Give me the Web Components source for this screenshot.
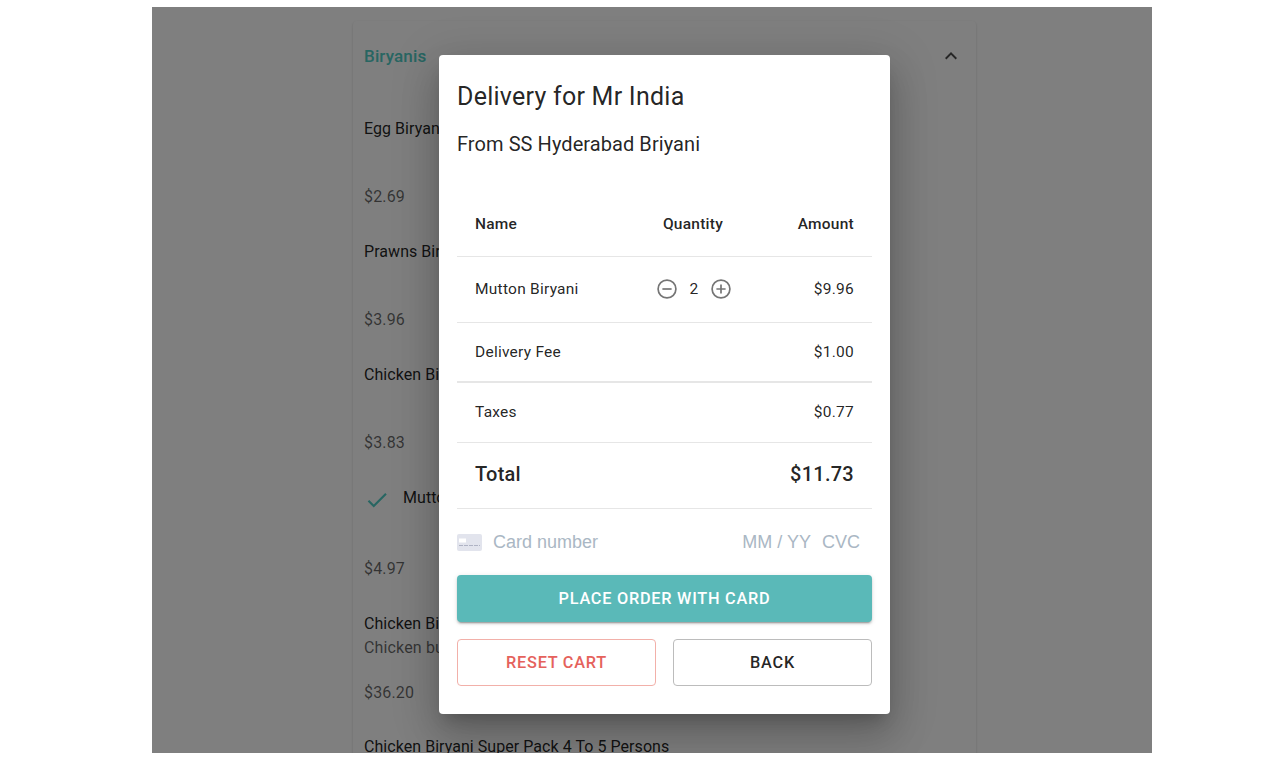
<!DOCTYPE html>
<html>
<head>
<meta charset="utf-8">
<title>Delivery</title>
<style>
  html, body { margin: 0; background: #fff; }
  body { padding: 7px 0 0 152px; font-family: Roboto, "Liberation Sans", sans-serif; }
</style>
</head>
<body>
<app-frame>
  <menu-section title="Biryanis">
    <menu-item name="Egg Biryani" price="$2.69"></menu-item>
    <menu-item name="Prawns Biryani" price="$3.96"></menu-item>
    <menu-item name="Chicken Biryani" price="$3.83"></menu-item>
    <menu-item name="Mutton Biryani" price="$4.97" selected></menu-item>
    <menu-item name="Chicken Biryani Family Pack" desc="Chicken bucket" price="$36.20"></menu-item>
    <menu-item name="Chicken Biryani Super Pack 4 To 5 Persons"></menu-item>
  </menu-section>
  <order-dialog slot="dialog" customer="Mr India" shop="SS Hyderabad Briyani">
    <order-row kind="head" name="Name" qty="Quantity" amount="Amount" lift="1"></order-row>
    <order-row name="Mutton Biryani" amount="$9.96" height="66" lift="1"><qty-stepper value="2"></qty-stepper></order-row>
    <order-row name="Delivery Fee" amount="$1.00" height="60" rule="2"></order-row>
    <order-row name="Taxes" amount="$0.77" height="60" lift="1"></order-row>
    <order-row kind="total" name="Total" amount="$11.73" lift="3"></order-row>
    <card-field></card-field>
    <action-button kind="primary">Place order with card</action-button>
    <div style="display:grid;grid-template-columns:1fr 1fr;gap:17px;margin-top:17px">
      <action-button kind="danger">Reset cart</action-button>
      <action-button kind="plain">Back</action-button>
    </div>
  </order-dialog>
</app-frame>

<script>
// Small helper: every element gets an open shadow root with its own markup
class ShadowElement extends HTMLElement {
  constructor() {
    super();
    this.attachShadow({ mode: "open" });
  }
  connectedCallback() {
    this.shadowRoot.innerHTML = this.render();
  }
  attr(name, fallback = "") {
    return this.hasAttribute(name) ? this.getAttribute(name) : fallback;
  }
}

// Grey page area, the dialog lies on top of the content
class AppFrame extends ShadowElement {
  render() {
    return `
<style>
  :host { display: block; position: relative; width: 1000px; height: 746px; overflow: hidden; background: #fff; }
  .content { padding: 14px 176px 0 201px; }
  .overlay { position: absolute; inset: 0; background: rgba(0,0,0,.5); padding: 48px 0 0 287px; }
</style>
<div class="content"><slot></slot></div>
<div class="overlay"><slot name="dialog"></slot></div>`;
  }
}

class MenuSection extends ShadowElement {
  render() {
    return `
<style>
  :host { display: block; background: #fff; border-radius: 4px;
    box-shadow: 0 2px 1px -1px rgba(0,0,0,.2), 0 1px 1px 0 rgba(0,0,0,.14), 0 1px 3px 0 rgba(0,0,0,.12); }
  header { display: flex; align-items: center; justify-content: space-between; height: 70px; padding: 0 13px 26px 11px; }
  h2 { margin: 0; font: 500 17px/24px Roboto, sans-serif; letter-spacing: .15px; color: #50ccc5; }
  svg { width: 24px; height: 24px; fill: rgba(0,0,0,.7); display: block; }
</style>
<header>
  <h2>${this.attr("title")}</h2>
  <svg viewBox="0 0 24 24"><path d="M12 8l-6 6 1.41 1.41L12 10.83l4.59 4.58L18 14z"/></svg>
</header>
<slot></slot>`;
  }
}

class MenuItem extends ShadowElement {
  render() {
    const selected = this.hasAttribute("selected");
    const desc = this.attr("desc");
    const price = this.attr("price");
    const gap = selected ? 23 : desc ? 21 : 20;
    return `
<style>
  :host { display: block; height: ${selected ? 126 : 123}px; padding-left: 11px; font: 400 16px/24px Roboto, sans-serif; letter-spacing: .15px; }
  .name { display: flex; align-items: center; height: 24px; letter-spacing: .05px; color: rgba(0,0,0,.87); }
  svg { width: 26px; height: 26px; margin: 3px 13px 0 0; fill: #50ccc5; flex: none; }
  .desc { height: 24px; color: rgba(0,0,0,.6); }
  .price { margin-top: ${gap}px; color: rgba(0,0,0,.6); }
</style>
<div class="name">
  ${selected ? `<svg viewBox="0 0 24 24"><path d="M9 16.17L4.83 12l-1.42 1.41L9 19 21 7l-1.41-1.41z"/></svg>` : ""}
  <span>${this.attr("name")}</span>
</div>
${price ? `<div class="desc">${desc}</div><div class="price">${price}</div>` : ""}`;
  }
}

class OrderDialog extends ShadowElement {
  render() {
    return `
<style>
  :host { display: block; box-sizing: border-box; width: 451px; height: 659px; padding: 25px 18px 0; background: #fff; border-radius: 4px;
    color: rgba(0,0,0,.87);
    box-shadow: 0 11px 15px -7px rgba(0,0,0,.2), 0 24px 38px 3px rgba(0,0,0,.14), 0 9px 46px 8px rgba(0,0,0,.12); }
  h1 { margin: 0; font: 400 25px/34px Roboto, sans-serif; letter-spacing: .25px; }
  h2 { margin: 16px 0 35px; font: 400 20px/28px Roboto, sans-serif; letter-spacing: .07px; }
</style>
<h1>Delivery for ${this.attr("customer")}</h1>
<h2>From ${this.attr("shop")}</h2>
<slot></slot>`;
  }
}

class OrderRow extends ShadowElement {
  render() {
    const kind = this.attr("kind", "row");
    const height = { head: 64, total: 66 }[kind] || this.attr("height", "60");
    const font = {
      head: "500 15.5px/20px",
      total: "500 20px/28px",
      row: "400 15.5px/20px"
    }[kind];
    return `
<style>
  :host { display: grid; grid-template-columns: 160px 116px 1fr; align-items: center; box-sizing: border-box;
    height: ${height}px; padding: 0 18px ${this.attr("lift", "0")}px; border-bottom: ${this.attr("rule", "1")}px solid #e6e6e6;
    font: ${font} Roboto, sans-serif; letter-spacing: .25px; color: rgba(0,0,0,.87); }
  .qty { display: flex; justify-content: center; }
  .amount { text-align: right; }
</style>
<div>${this.attr("name")}</div>
<div class="qty">${this.attr("qty")}<slot></slot></div>
<div class="amount">${this.attr("amount")}</div>`;
  }
}

class QtyStepper extends ShadowElement {
  render() {
    return `
<style>
  :host { display: flex; align-items: center; gap: 10px; margin-left: 2px; }
  svg { display: block; width: 20px; height: 20px; fill: none; stroke: #757575; stroke-width: 1.7; }
  span { width: 14px; text-align: center; }
</style>
<svg viewBox="0 0 20 20"><circle cx="10" cy="10" r="8.9"/><path d="M5.4 10h9.2"/></svg>
<span>${this.attr("value")}</span>
<svg viewBox="0 0 20 20"><circle cx="10" cy="10" r="8.9"/><path d="M5.4 10h9.2M10 5.4v9.2"/></svg>`;
  }
}

class CardField extends ShadowElement {
  render() {
    return `
<style>
  :host { display: flex; align-items: center; box-sizing: border-box; height: 66px; padding: 0 12px 0 0;
    font: 400 18px/24px "Liberation Sans", Arial, sans-serif; color: #aab7c4; }
  svg { width: 25px; height: 17px; flex: none; margin: 0 11px 0 0; }
  .number { flex: 1; }
  .exp { margin-right: 11px; }
</style>
<svg viewBox="0 0 25 17">
  <rect width="25" height="17" rx="2" fill="#e2e4ed"/>
  <rect x="2" y="4.5" width="7" height="4" fill="#fff"/>
  <path d="M2 11.5h21" stroke="#afb3c4" stroke-width="1" stroke-dasharray="4 1"/>
</svg>
<span class="number">Card number</span>
<span class="exp">MM / YY</span>
<span>CVC</span>`;
  }
}

class ActionButton extends ShadowElement {
  render() {
    const look = {
      primary: "background:#5ab9b8;color:#fff;box-shadow:0 3px 1px -2px rgba(0,0,0,.2),0 2px 2px 0 rgba(0,0,0,.14),0 1px 5px 0 rgba(0,0,0,.12);",
      danger: "border:1px solid #f2b0a9;color:#e5625c;",
      plain: "border:1px solid #bcbcbc;color:rgba(0,0,0,.87);"
    }[this.attr("kind")];
    return `
<style>
  :host { display: block; }
  button { display: block; box-sizing: border-box; width: 100%; height: 47px; padding: 0; background: none; border: 0; border-radius: 4px;
    font: 500 16.3px/24px Roboto, sans-serif; letter-spacing: .75px; text-transform: uppercase; ${look} }
</style>
<button><slot></slot></button>`;
  }
}

customElements.define("app-frame", AppFrame);
customElements.define("menu-section", MenuSection);
customElements.define("menu-item", MenuItem);
customElements.define("order-dialog", OrderDialog);
customElements.define("order-row", OrderRow);
customElements.define("qty-stepper", QtyStepper);
customElements.define("card-field", CardField);
customElements.define("action-button", ActionButton);
</script>
</body>
</html>
